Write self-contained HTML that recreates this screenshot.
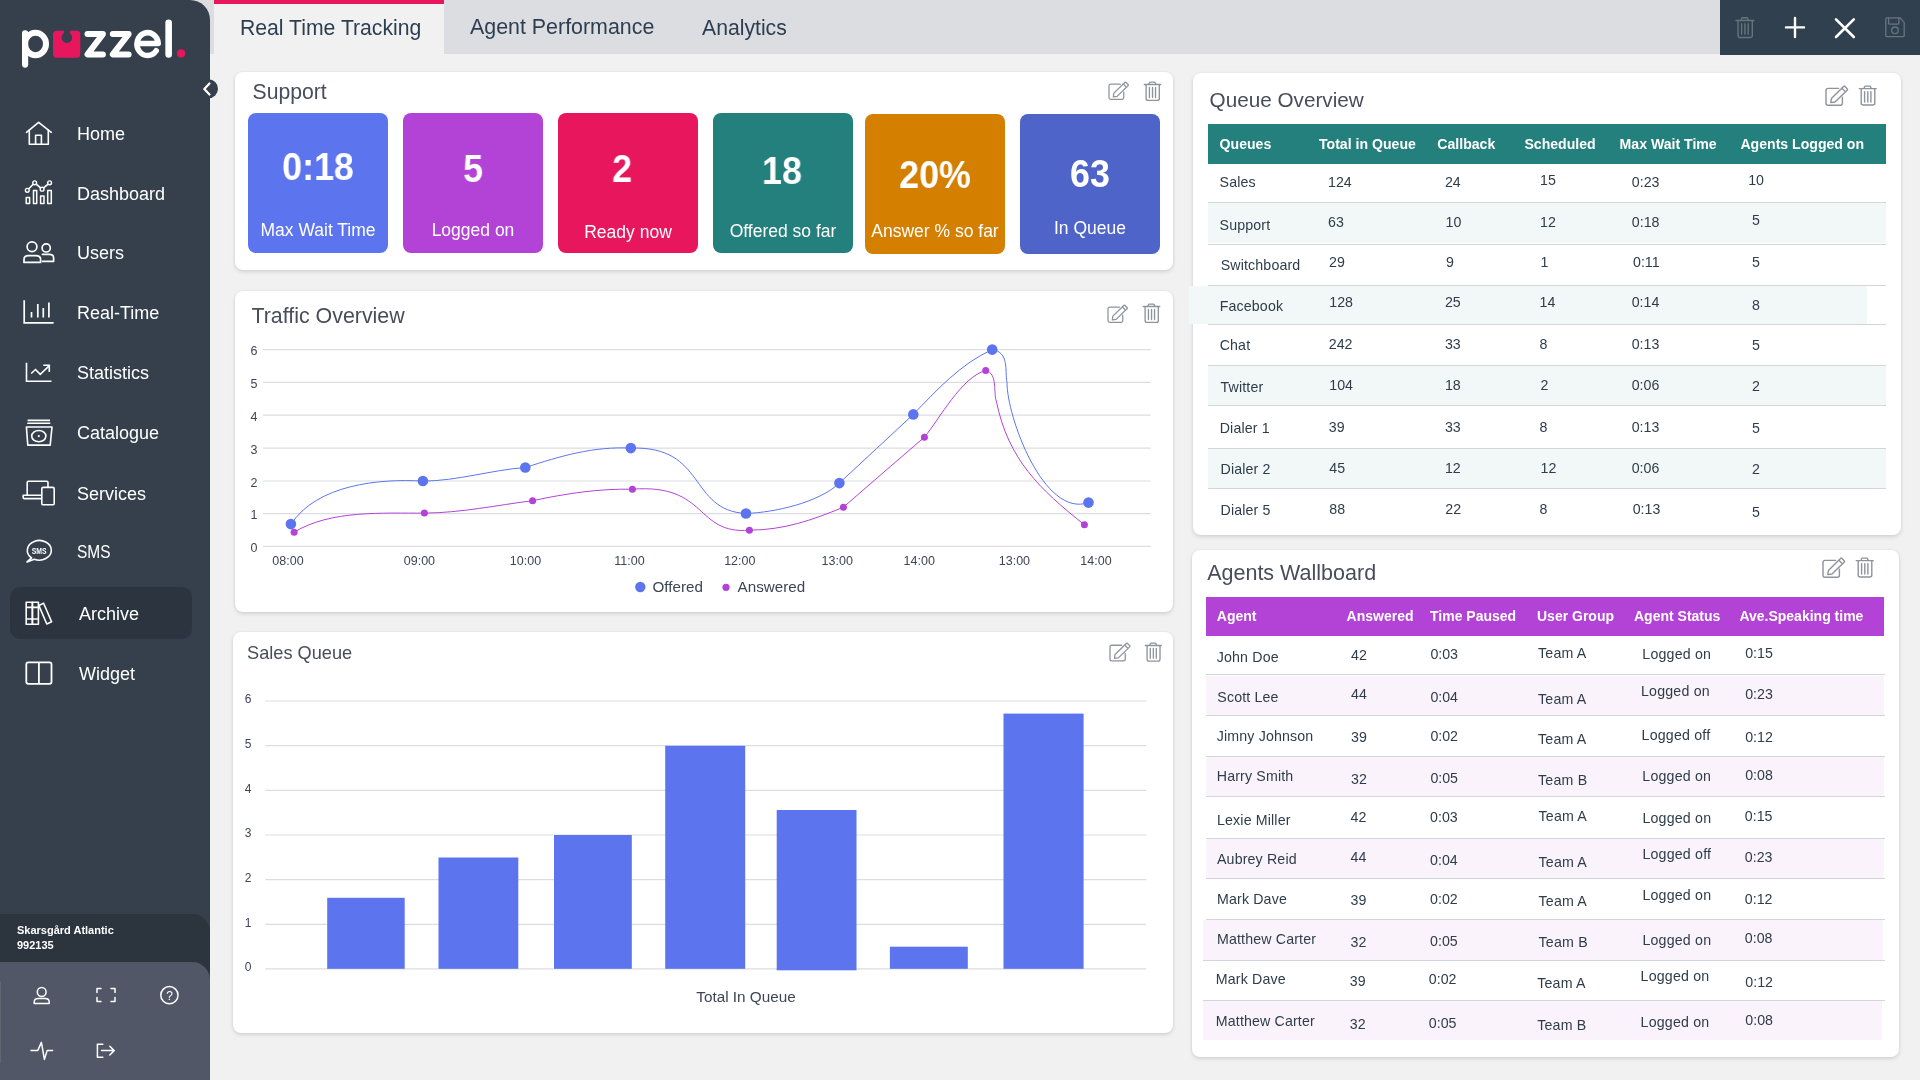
<!DOCTYPE html><html><head><meta charset="utf-8"><style>
html,body{margin:0;padding:0;width:1920px;height:1080px;overflow:hidden;background:#f1f1f1;font-family:"Liberation Sans", sans-serif;}
.t{position:absolute;white-space:nowrap;}
.r{position:absolute;}
svg{position:absolute;overflow:visible;}
#wrap{position:absolute;left:0;top:0;width:1920px;height:1080px;will-change:transform;}
</style></head><body><div id="wrap">
<div class="r" style="left:0px;top:0px;width:1920px;height:54px;background:#dcdde1;"></div>
<div class="r" style="left:214px;top:0px;width:230px;height:54px;background:#f1f1f1;"></div>
<div class="r" style="left:214px;top:0px;width:230px;height:4px;background:#e8175d;"></div>
<div class="t" style="left:240.0px;top:17.3px;font-size:21.2px;line-height:21.2px;color:#2c3e50;">Real Time Tracking</div>
<div class="t" style="left:470.0px;top:17.2px;font-size:21.4px;line-height:21.4px;color:#2c3e50;">Agent Performance</div>
<div class="t" style="left:702.0px;top:17.3px;font-size:21.2px;line-height:21.2px;color:#2c3e50;">Analytics</div>
<div class="r" style="left:1720px;top:0px;width:200px;height:55px;background:#30404f;"></div>
<div class="r" style="left:0px;top:0px;width:210px;height:1080px;background:#35404c;border-top-right-radius:20px;"></div>
<svg style="left:0;top:0" width="1" height="1"><circle cx="208.5" cy="88.7" r="9.5" fill="#35404c"/><path d="M209.5 83.5 L204.3 89 L209.5 94.5" fill="none" stroke="#fff" stroke-width="2.2" stroke-linecap="round" stroke-linejoin="round"/></svg>
<div class="r" style="left:10px;top:587px;width:182px;height:52px;background:#2c353f;border-radius:10px;"></div>
<div class="t" style="left:77.0px;top:124.9px;font-size:18px;line-height:18px;color:#ffffff;">Home</div>
<div class="t" style="left:77.0px;top:184.9px;font-size:18px;line-height:18px;color:#ffffff;">Dashboard</div>
<div class="t" style="left:77.0px;top:243.9px;font-size:18px;line-height:18px;color:#ffffff;">Users</div>
<div class="t" style="left:77.0px;top:303.9px;font-size:18px;line-height:18px;color:#ffffff;">Real-Time</div>
<div class="t" style="left:77.0px;top:363.9px;font-size:18px;line-height:18px;color:#ffffff;">Statistics</div>
<div class="t" style="left:77.0px;top:423.9px;font-size:18px;line-height:18px;color:#ffffff;">Catalogue</div>
<div class="t" style="left:77.0px;top:484.9px;font-size:18px;line-height:18px;color:#ffffff;">Services</div>
<div class="t" style="left:77.0px;top:542.9px;font-size:18px;line-height:18px;color:#ffffff;transform:scaleX(0.86);transform-origin:0 0;">SMS</div>
<div class="t" style="left:79.0px;top:604.9px;font-size:18px;line-height:18px;color:#ffffff;">Archive</div>
<div class="t" style="left:79.0px;top:664.9px;font-size:18px;line-height:18px;color:#ffffff;">Widget</div>
<div class="r" style="left:0px;top:914px;width:210px;height:60px;background:#2c343e;border-top-right-radius:18px;"></div>
<div class="r" style="left:0px;top:962px;width:210px;height:118px;background:#515766;border-top-right-radius:18px;"></div>
<div class="r" style="left:0px;top:982px;width:1px;height:81px;background:#62666f;"></div>
<div class="t" style="left:17.0px;top:925.4px;font-size:11px;line-height:11px;color:#ffffff;font-weight:bold;">Skarsgård Atlantic</div>
<div class="t" style="left:17.0px;top:940.4px;font-size:11px;line-height:11px;color:#ffffff;font-weight:bold;">992135</div>
<div class="r" style="left:235px;top:72px;width:938px;height:198px;background:#ffffff;border-radius:8px;box-shadow:0 2px 4px rgba(0,0,0,0.12),0 0 3px rgba(0,0,0,0.07);"></div>
<div class="r" style="left:235px;top:291px;width:938px;height:321px;background:#ffffff;border-radius:8px;box-shadow:0 2px 4px rgba(0,0,0,0.12),0 0 3px rgba(0,0,0,0.07);"></div>
<div class="r" style="left:233px;top:632px;width:940px;height:401px;background:#ffffff;border-radius:8px;box-shadow:0 2px 4px rgba(0,0,0,0.12),0 0 3px rgba(0,0,0,0.07);"></div>
<div class="r" style="left:1193px;top:73px;width:708px;height:462px;background:#ffffff;border-radius:8px;box-shadow:0 2px 4px rgba(0,0,0,0.12),0 0 3px rgba(0,0,0,0.07);"></div>
<div class="r" style="left:1192px;top:550px;width:707px;height:507px;background:#ffffff;border-radius:8px;box-shadow:0 2px 4px rgba(0,0,0,0.12),0 0 3px rgba(0,0,0,0.07);"></div>
<div class="r" style="left:248px;top:113px;width:140px;height:140px;background:#5c75ee;border-radius:8px;"></div>
<div class="t" style="left:-82.0px;width:800px;text-align:center;top:146.8px;font-size:39px;line-height:39px;color:#ffffff;font-weight:bold;transform:scaleX(0.92);">0:18</div>
<div class="t" style="left:-82.0px;width:800px;text-align:center;top:222.2px;font-size:17.5px;line-height:17.5px;color:#ffffff;">Max Wait Time</div>
<div class="r" style="left:403px;top:113px;width:140px;height:140px;background:#b342d6;border-radius:8px;"></div>
<div class="t" style="left:73.0px;width:800px;text-align:center;top:148.8px;font-size:39px;line-height:39px;color:#ffffff;font-weight:bold;transform:scaleX(0.92);">5</div>
<div class="t" style="left:73.0px;width:800px;text-align:center;top:222.2px;font-size:17.5px;line-height:17.5px;color:#ffffff;">Logged on</div>
<div class="r" style="left:558px;top:113px;width:140px;height:140px;background:#e8175d;border-radius:8px;"></div>
<div class="t" style="left:222.0px;width:800px;text-align:center;top:149.3px;font-size:39px;line-height:39px;color:#ffffff;font-weight:bold;transform:scaleX(0.92);">2</div>
<div class="t" style="left:228.0px;width:800px;text-align:center;top:223.9px;font-size:17.5px;line-height:17.5px;color:#ffffff;">Ready now</div>
<div class="r" style="left:713px;top:113px;width:140px;height:140px;background:#23807c;border-radius:8px;"></div>
<div class="t" style="left:381.5px;width:800px;text-align:center;top:151.3px;font-size:39px;line-height:39px;color:#ffffff;font-weight:bold;transform:scaleX(0.92);">18</div>
<div class="t" style="left:383.0px;width:800px;text-align:center;top:222.9px;font-size:17.5px;line-height:17.5px;color:#ffffff;">Offered so far</div>
<div class="r" style="left:865px;top:114px;width:140px;height:140px;background:#d47f00;border-radius:8px;"></div>
<div class="t" style="left:535.0px;width:800px;text-align:center;top:155.1px;font-size:39px;line-height:39px;color:#ffffff;font-weight:bold;transform:scaleX(0.92);">20%</div>
<div class="t" style="left:535.0px;width:800px;text-align:center;top:223.2px;font-size:17.5px;line-height:17.5px;color:#ffffff;">Answer % so far</div>
<div class="r" style="left:1020px;top:114px;width:140px;height:140px;background:#4f64c9;border-radius:8px;"></div>
<div class="t" style="left:690.0px;width:800px;text-align:center;top:154.1px;font-size:39px;line-height:39px;color:#ffffff;font-weight:bold;transform:scaleX(0.92);">63</div>
<div class="t" style="left:690.0px;width:800px;text-align:center;top:220.4px;font-size:17.5px;line-height:17.5px;color:#ffffff;">In Queue</div>
<div class="t" style="left:252.5px;top:81.3px;font-size:21.2px;line-height:21.2px;color:#474d5a;">Support</div>
<div class="t" style="left:251.4px;top:306.2px;font-size:21.4px;line-height:21.4px;color:#474d5a;">Traffic Overview</div>
<div class="t" style="left:247.0px;top:643.8px;font-size:18.2px;line-height:18.2px;color:#474d5a;">Sales Queue</div>
<div class="t" style="left:1209.6px;top:89.5px;font-size:20.7px;line-height:20.7px;color:#474d5a;">Queue Overview</div>
<div class="t" style="left:1207.2px;top:563.1px;font-size:21.5px;line-height:21.5px;color:#474d5a;">Agents Wallboard</div>
<svg style="left:1825.8px;top:86.2px" width="1" height="1"><g transform="scale(1.0)" fill="none" stroke="#8e939c" stroke-width="1.4" stroke-linejoin="round" stroke-linecap="round"><path d="M12.6 2.4 H2 Q0 2.4 0 4.4 V17.2 Q0 19.2 2 19.2 H14.4 Q16.4 19.2 16.4 17.2 V11.2"/><path d="M5.4 12.4 L17.8 0.3 Q18.2 -0.1 18.6 0.3 L21.4 3.1 Q21.8 3.5 21.4 3.9 L9 16 L4.8 16.6 Z"/><path d="M15.9 2.3 L18.7 5.1"/></g></svg>
<svg style="left:1858.5px;top:86.1px" width="1" height="1"><g transform="scale(1.0)" fill="none" stroke="#8e939c" stroke-width="1.4" stroke-linecap="round" stroke-linejoin="round"><path d="M0.3 2.6 H17.2"/><path d="M5 2.4 L5.6 0.8 Q5.9 0.1 6.6 0.1 H10.6 Q11.3 0.1 11.6 0.8 L12.2 2.4"/><path d="M2.2 2.8 V17 Q2.2 19 4.2 19 H13.8 Q15.8 19 15.8 17 V2.8"/><path d="M5.6 5.6 V16 M8.8 5.6 V16 M11.9 5.6 V16"/></g></svg>
<svg style="left:1109.3px;top:82px" width="1" height="1"><g transform="scale(0.9)" fill="none" stroke="#8e939c" stroke-width="1.4" stroke-linejoin="round" stroke-linecap="round"><path d="M12.6 2.4 H2 Q0 2.4 0 4.4 V17.2 Q0 19.2 2 19.2 H14.4 Q16.4 19.2 16.4 17.2 V11.2"/><path d="M5.4 12.4 L17.8 0.3 Q18.2 -0.1 18.6 0.3 L21.4 3.1 Q21.8 3.5 21.4 3.9 L9 16 L4.8 16.6 Z"/><path d="M15.9 2.3 L18.7 5.1"/></g></svg>
<svg style="left:1144px;top:81.6px" width="1" height="1"><g transform="scale(0.97)" fill="none" stroke="#8e939c" stroke-width="1.4" stroke-linecap="round" stroke-linejoin="round"><path d="M0.3 2.6 H17.2"/><path d="M5 2.4 L5.6 0.8 Q5.9 0.1 6.6 0.1 H10.6 Q11.3 0.1 11.6 0.8 L12.2 2.4"/><path d="M2.2 2.8 V17 Q2.2 19 4.2 19 H13.8 Q15.8 19 15.8 17 V2.8"/><path d="M5.6 5.6 V16 M8.8 5.6 V16 M11.9 5.6 V16"/></g></svg>
<svg style="left:1108px;top:304.6px" width="1" height="1"><g transform="scale(0.9)" fill="none" stroke="#8e939c" stroke-width="1.4" stroke-linejoin="round" stroke-linecap="round"><path d="M12.6 2.4 H2 Q0 2.4 0 4.4 V17.2 Q0 19.2 2 19.2 H14.4 Q16.4 19.2 16.4 17.2 V11.2"/><path d="M5.4 12.4 L17.8 0.3 Q18.2 -0.1 18.6 0.3 L21.4 3.1 Q21.8 3.5 21.4 3.9 L9 16 L4.8 16.6 Z"/><path d="M15.9 2.3 L18.7 5.1"/></g></svg>
<svg style="left:1143px;top:304.2px" width="1" height="1"><g transform="scale(0.97)" fill="none" stroke="#8e939c" stroke-width="1.4" stroke-linecap="round" stroke-linejoin="round"><path d="M0.3 2.6 H17.2"/><path d="M5 2.4 L5.6 0.8 Q5.9 0.1 6.6 0.1 H10.6 Q11.3 0.1 11.6 0.8 L12.2 2.4"/><path d="M2.2 2.8 V17 Q2.2 19 4.2 19 H13.8 Q15.8 19 15.8 17 V2.8"/><path d="M5.6 5.6 V16 M8.8 5.6 V16 M11.9 5.6 V16"/></g></svg>
<svg style="left:1109.8px;top:643.3px" width="1" height="1"><g transform="scale(0.93)" fill="none" stroke="#8e939c" stroke-width="1.4" stroke-linejoin="round" stroke-linecap="round"><path d="M12.6 2.4 H2 Q0 2.4 0 4.4 V17.2 Q0 19.2 2 19.2 H14.4 Q16.4 19.2 16.4 17.2 V11.2"/><path d="M5.4 12.4 L17.8 0.3 Q18.2 -0.1 18.6 0.3 L21.4 3.1 Q21.8 3.5 21.4 3.9 L9 16 L4.8 16.6 Z"/><path d="M15.9 2.3 L18.7 5.1"/></g></svg>
<svg style="left:1145.2px;top:643.3px" width="1" height="1"><g transform="scale(0.95)" fill="none" stroke="#8e939c" stroke-width="1.4" stroke-linecap="round" stroke-linejoin="round"><path d="M0.3 2.6 H17.2"/><path d="M5 2.4 L5.6 0.8 Q5.9 0.1 6.6 0.1 H10.6 Q11.3 0.1 11.6 0.8 L12.2 2.4"/><path d="M2.2 2.8 V17 Q2.2 19 4.2 19 H13.8 Q15.8 19 15.8 17 V2.8"/><path d="M5.6 5.6 V16 M8.8 5.6 V16 M11.9 5.6 V16"/></g></svg>
<svg style="left:1823.4px;top:558.4px" width="1" height="1"><g transform="scale(1.0)" fill="none" stroke="#8e939c" stroke-width="1.4" stroke-linejoin="round" stroke-linecap="round"><path d="M12.6 2.4 H2 Q0 2.4 0 4.4 V17.2 Q0 19.2 2 19.2 H14.4 Q16.4 19.2 16.4 17.2 V11.2"/><path d="M5.4 12.4 L17.8 0.3 Q18.2 -0.1 18.6 0.3 L21.4 3.1 Q21.8 3.5 21.4 3.9 L9 16 L4.8 16.6 Z"/><path d="M15.9 2.3 L18.7 5.1"/></g></svg>
<svg style="left:1856.4px;top:558.2px" width="1" height="1"><g transform="scale(1.0)" fill="none" stroke="#8e939c" stroke-width="1.4" stroke-linecap="round" stroke-linejoin="round"><path d="M0.3 2.6 H17.2"/><path d="M5 2.4 L5.6 0.8 Q5.9 0.1 6.6 0.1 H10.6 Q11.3 0.1 11.6 0.8 L12.2 2.4"/><path d="M2.2 2.8 V17 Q2.2 19 4.2 19 H13.8 Q15.8 19 15.8 17 V2.8"/><path d="M5.6 5.6 V16 M8.8 5.6 V16 M11.9 5.6 V16"/></g></svg>
<svg style="left:0;top:0" width="1" height="1"><g transform="translate(1735.7,17.6) scale(1.05)" fill="none" stroke="#68757f" stroke-width="1.3" stroke-linecap="round" stroke-linejoin="round"><path d="M0.3 2.8 H17.2"/><path d="M5 2.6 L5.6 1 Q5.9 0.1 6.6 0.1 H10.6 Q11.3 0.1 11.6 1 L12.2 2.6"/><path d="M2.2 3 V17.4 Q2.2 19 3.8 19 H14.2 Q15.8 19 15.8 17.4 V3"/><path d="M5.6 5.8 V15.8 M8.8 5.8 V15.8 M11.9 5.8 V15.8"/></g><path d="M1795 18 V37 M1786 27.4 H1804" stroke="#ffffff" stroke-width="2.4" stroke-linecap="round"/><path d="M1836 19.3 L1853.8 37 M1853.8 19.3 L1836 37" stroke="#ffffff" stroke-width="2.6" stroke-linecap="round"/><g fill="none" stroke="#68757f" stroke-width="1.3" stroke-linejoin="round"><path d="M1887 17.8 H1900 L1904.2 22.4 V35.4 Q1904.2 36.6 1903 36.6 H1887 Q1885.8 36.6 1885.8 35.4 V19 Q1885.8 17.8 1887 17.8 Z"/><path d="M1888.6 17.8 V23.4 Q1888.6 24.2 1889.4 24.2 H1898 Q1898.8 24.2 1898.8 23.4 V17.8"/><circle cx="1895" cy="30.3" r="3.3"/></g></svg>
<svg style="left:0;top:0" width="1" height="1"><g fill="none" stroke="#ffffff" stroke-linecap="round" stroke-linejoin="round"><path d="M25.1 33.3 V64.6" stroke-width="6.2"/><ellipse cx="35.5" cy="43.95" rx="10.5" ry="11.2" stroke-width="6"/><path d="M87.5 34.1 H102.9 L87.5 54.4 H102.9" stroke-width="6"/><path d="M112.8 34.1 H128.6 L112.8 54.4 H128.6" stroke-width="6"/><path d="M137.7 43.5 H158.2 A10.6 11.4 0 1 0 156.2 50.8" stroke-width="5.6"/><path d="M168.65 22.8 V54.4" stroke-width="6.6"/></g><rect x="53" y="30.8" width="27.3" height="26.9" rx="3.7" fill="#e8175d"/><rect x="63.9" y="29" width="5.9" height="6" fill="#35404c"/><circle cx="66.85" cy="37.6" r="5.3" fill="#35404c"/><circle cx="181.1" cy="53.4" r="4.1" fill="#e8175d"/></svg>
<svg style="left:0;top:0" width="1" height="1"><g fill="none" stroke="#ffffff" stroke-width="1.6" stroke-linecap="round" stroke-linejoin="round"><path d="M26.5 132.3 L38.6 122.3 L51.3 132.3"/><path d="M29.3 130 V144.2 H48.3 V130"/><path d="M35.6 144.2 V135.3 H41.4 V144.2"/><path d="M27.3 190.3 L34.7 182.8 L42.1 189.2 L49.6 182.8"/></g><g fill="#35404c" stroke="#ffffff" stroke-width="1.4"><circle cx="27.3" cy="190.3" r="1.9"/><circle cx="34.7" cy="182.8" r="1.9"/><circle cx="42.1" cy="189.2" r="1.9"/><circle cx="49.6" cy="182.8" r="1.9"/></g><g fill="none" stroke="#ffffff" stroke-width="1.5" stroke-linejoin="round"><rect x="26.2" y="197.6" width="3.4" height="6"/><rect x="33.5" y="190.6" width="3.2" height="13"/><rect x="40.6" y="196" width="3.4" height="7.6"/><rect x="47.7" y="190.6" width="3.6" height="13"/></g><g fill="none" stroke="#ffffff" stroke-width="1.7" stroke-linecap="round" stroke-linejoin="round"><circle cx="32" cy="246.8" r="4.9"/><path d="M24 262.4 V259.5 Q24 255.7 28.5 255.7 H35.8 Q40.6 255.7 40.6 259.5 V262.4 Z"/><circle cx="46.2" cy="247.9" r="4.1"/><path d="M42.4 254.3 H49.6 Q53.6 254.3 53.6 258 V261.3 H42.6"/></g><g fill="none" stroke="#ffffff" stroke-width="1.7" stroke-linecap="butt"><path d="M24.2 300.2 V322.8 H53.6"/><path d="M31.5 312 V317.6 M37.8 304 V317.6 M43.3 308 V317.6 M48.9 302.6 V317.6"/></g><g fill="none" stroke="#ffffff" stroke-width="1.6" stroke-linejoin="miter"><path d="M26.5 362.8 V381.2 H51.5"/><path d="M31.2 373.5 L35.5 369.5 L40.2 374.3 L48.9 366.2"/><path d="M43.3 365.3 H49.3 V371.9"/></g><g fill="none" stroke="#ffffff" stroke-width="1.6" stroke-linejoin="round"><path d="M27.6 420.4 H50 M27.3 423.2 H50.3"/><path d="M26.4 427 H52 L50.2 445.1 H27.8 Z"/><ellipse cx="38.8" cy="436.1" rx="7.1" ry="5.6"/></g><circle cx="38.8" cy="436.1" r="1.1" fill="#ffffff"/><g fill="none" stroke="#ffffff" stroke-width="1.6" stroke-linejoin="round"><path d="M27.2 495 V482.4 Q27.2 481.2 28.4 481.2 H46.8 Q48 481.2 48 482.4 V487"/><path d="M41.4 498.6 H24.4 Q23.2 498.6 23.2 497.4 V495.2 H41.4"/><rect x="41.8" y="487.4" width="12.4" height="17.4" rx="1.4"/></g><g fill="none" stroke="#ffffff" stroke-width="1.6" stroke-linejoin="round"><path d="M31.6 557.8 A12 9.8 0 1 1 34.3 559.2 L27 561.9 Z"/></g><text x="0" y="0" transform="translate(39.2,554) scale(0.8,1)" font-family="Liberation Sans" font-weight="bold" font-size="8.6" fill="#ffffff" text-anchor="middle">SMS</text><g fill="none" stroke="#ffffff" stroke-width="1.6" stroke-linejoin="round"><rect x="26.2" y="602.2" width="6.2" height="22"/><rect x="32.4" y="602.2" width="6" height="22"/><path d="M26.2 607.4 H38.4 M26.2 619 H38.4"/><path d="M38.8 605.4 L43.6 603.2 L51.6 621.8 L46.8 624 Z"/></g><g fill="none" stroke="#ffffff" stroke-width="1.8" stroke-linejoin="round"><rect x="26.3" y="662.4" width="25.2" height="21.4" rx="2"/><path d="M38.9 662.4 V683.8"/></g><g fill="none" stroke="#ffffff" stroke-width="1.5" stroke-linecap="round" stroke-linejoin="round"><circle cx="41.7" cy="992" r="4.4"/><path d="M34.2 1003.6 V1002.2 Q34.2 998.6 38.2 998.6 H45.2 Q49.2 998.6 49.2 1002.2 V1003.6 Z"/><path d="M97 992.6 V988.6 H101 M111 988.6 H115 V992.6 M115 997.6 V1001.6 H111 M101 1001.6 H97 V997.6"/><circle cx="169.4" cy="995.2" r="8.6"/><path d="M31 1050.4 H37.8 L41.4 1042.4 L44.4 1059.4 L47.2 1050.4 H52.6"/><path d="M102.8 1044.2 H97.4 V1057.2 H102.8"/><path d="M101.6 1050.6 H114.2 M109.8 1046.2 L114.2 1050.6 L109.8 1055"/></g><text x="169.6" y="999.6" font-family="Liberation Sans" font-size="12" fill="#ffffff" text-anchor="middle">?</text></svg>
<svg style="left:0;top:0" width="1" height="1"><path d="M263 349.6 H1150.6" stroke="#dcdde1" stroke-width="1.2"/><path d="M263 382.4 H1150.6" stroke="#dcdde1" stroke-width="1.2"/><path d="M263 415.2 H1150.6" stroke="#dcdde1" stroke-width="1.2"/><path d="M263 448.2 H1150.6" stroke="#dcdde1" stroke-width="1.2"/><path d="M263 481.0 H1150.6" stroke="#dcdde1" stroke-width="1.2"/><path d="M263 513.7 H1150.6" stroke="#dcdde1" stroke-width="1.2"/><path d="M263 546.4 H1150.6" stroke="#dcdde1" stroke-width="1.2"/></svg>
<div class="t" style="left:-146.0px;width:800px;text-align:center;top:345.1px;font-size:12.5px;line-height:12.5px;color:#3d4655;">6</div>
<div class="t" style="left:-146.0px;width:800px;text-align:center;top:377.9px;font-size:12.5px;line-height:12.5px;color:#3d4655;">5</div>
<div class="t" style="left:-146.0px;width:800px;text-align:center;top:410.7px;font-size:12.5px;line-height:12.5px;color:#3d4655;">4</div>
<div class="t" style="left:-146.0px;width:800px;text-align:center;top:443.7px;font-size:12.5px;line-height:12.5px;color:#3d4655;">3</div>
<div class="t" style="left:-146.0px;width:800px;text-align:center;top:476.5px;font-size:12.5px;line-height:12.5px;color:#3d4655;">2</div>
<div class="t" style="left:-146.0px;width:800px;text-align:center;top:509.2px;font-size:12.5px;line-height:12.5px;color:#3d4655;">1</div>
<div class="t" style="left:-146.0px;width:800px;text-align:center;top:541.9px;font-size:12.5px;line-height:12.5px;color:#3d4655;">0</div>
<div class="t" style="left:-112.0px;width:800px;text-align:center;top:554.9px;font-size:12.5px;line-height:12.5px;color:#3d4655;">08:00</div>
<div class="t" style="left:19.4px;width:800px;text-align:center;top:554.9px;font-size:12.5px;line-height:12.5px;color:#3d4655;">09:00</div>
<div class="t" style="left:125.5px;width:800px;text-align:center;top:554.9px;font-size:12.5px;line-height:12.5px;color:#3d4655;">10:00</div>
<div class="t" style="left:229.5px;width:800px;text-align:center;top:554.9px;font-size:12.5px;line-height:12.5px;color:#3d4655;">11:00</div>
<div class="t" style="left:339.8px;width:800px;text-align:center;top:554.9px;font-size:12.5px;line-height:12.5px;color:#3d4655;">12:00</div>
<div class="t" style="left:437.2px;width:800px;text-align:center;top:554.9px;font-size:12.5px;line-height:12.5px;color:#3d4655;">13:00</div>
<div class="t" style="left:519.2px;width:800px;text-align:center;top:554.9px;font-size:12.5px;line-height:12.5px;color:#3d4655;">14:00</div>
<div class="t" style="left:614.4px;width:800px;text-align:center;top:554.9px;font-size:12.5px;line-height:12.5px;color:#3d4655;">13:00</div>
<div class="t" style="left:696.0px;width:800px;text-align:center;top:554.9px;font-size:12.5px;line-height:12.5px;color:#3d4655;">14:00</div>
<svg style="left:0;top:0" width="1" height="1"><path d="M294.0 532.3 C330.6 509.7 383.4 513.5 424.5 513.1 C461.4 512.8 496.2 505.3 532.5 500.7 C566.0 493.6 598.0 488.6 632.4 489.2 C708.3 483.4 694.9 534.7 749.4 530.2 C784.1 529.9 811.8 520.3 843.4 507.2 C870.6 484.1 897.0 460.1 924.4 437.2 C939.2 419.3 961.9 376.5 985.7 370.6 C997.9 372.9 993.3 393.6 996.3 401.1 C1008.3 459.7 1039.7 489.2 1084.4 524.8" fill="none" stroke="#b342d6" stroke-width="1"/><path d="M290.8 524.6 C316.7 484.4 379.6 478.5 422.7 481.1 C457.4 481.0 490.9 470.0 525.4 467.5 C560.2 456.1 593.7 446.2 630.9 448.1 C706.9 445.6 688.2 510.5 746.0 513.5 C774.2 512.4 818.3 502.9 839.4 483.1 C863.7 459.9 889.0 437.6 913.3 414.4 C936.2 390.5 961.3 363.3 992.2 349.6 C1009.5 352.3 1004.7 370.4 1007.0 382.6 C1006.8 416.0 1043.5 518.3 1088.5 502.6" fill="none" stroke="#5c75ee" stroke-width="1"/><circle cx="294.1" cy="532.2" r="3.5" fill="#b342d6"/><circle cx="424.4" cy="512.9" r="3.5" fill="#b342d6"/><circle cx="532.6" cy="500.7" r="3.5" fill="#b342d6"/><circle cx="632.4" cy="489.3" r="3.5" fill="#b342d6"/><circle cx="749.4" cy="530.25" r="3.5" fill="#b342d6"/><circle cx="843.4" cy="507.25" r="3.5" fill="#b342d6"/><circle cx="924.4" cy="437.2" r="3.5" fill="#b342d6"/><circle cx="985.7" cy="370.6" r="3.5" fill="#b342d6"/><circle cx="1084.4" cy="524.8" r="3.5" fill="#b342d6"/><circle cx="290.9" cy="524.1" r="5.3" fill="#5c75ee"/><circle cx="422.9" cy="481" r="5.3" fill="#5c75ee"/><circle cx="525.3" cy="467.5" r="5.3" fill="#5c75ee"/><circle cx="630.8" cy="448.1" r="5.3" fill="#5c75ee"/><circle cx="746" cy="513.5" r="5.3" fill="#5c75ee"/><circle cx="839.4" cy="483.1" r="5.3" fill="#5c75ee"/><circle cx="913.3" cy="414.4" r="5.3" fill="#5c75ee"/><circle cx="992.2" cy="349.6" r="5.3" fill="#5c75ee"/><circle cx="1088.5" cy="502.6" r="5.3" fill="#5c75ee"/><circle cx="640.3" cy="587" r="5.2" fill="#5c75ee"/><circle cx="726" cy="587.3" r="3.6" fill="#b342d6"/></svg>
<div class="t" style="left:652.5px;top:579.3px;font-size:15.2px;line-height:15.2px;color:#3d4655;">Offered</div>
<div class="t" style="left:737.6px;top:579.3px;font-size:15.2px;line-height:15.2px;color:#3d4655;">Answered</div>
<svg style="left:0;top:0" width="1" height="1"><path d="M265.3 701.0 H1146.3" stroke="#dcdde1" stroke-width="1.2"/><path d="M265.3 745.6 H1146.3" stroke="#dcdde1" stroke-width="1.2"/><path d="M265.3 790.3 H1146.3" stroke="#dcdde1" stroke-width="1.2"/><path d="M265.3 835.0 H1146.3" stroke="#dcdde1" stroke-width="1.2"/><path d="M265.3 879.6 H1146.3" stroke="#dcdde1" stroke-width="1.2"/><path d="M265.3 924.3 H1146.3" stroke="#dcdde1" stroke-width="1.2"/><path d="M265.3 968.8 H1146.3" stroke="#dcdde1" stroke-width="1.2"/><rect x="327.2" y="897.8" width="77.5" height="71.0" fill="#5c75ee"/><rect x="438.5" y="857.5" width="79.8" height="111.3" fill="#5c75ee"/><rect x="554" y="835" width="77.8" height="133.8" fill="#5c75ee"/><rect x="665.2" y="745.8" width="80.0" height="223.0" fill="#5c75ee"/><rect x="776.7" y="810" width="79.8" height="160.3" fill="#5c75ee"/><rect x="889.9" y="946.7" width="77.9" height="22.1" fill="#5c75ee"/><rect x="1003.5" y="713.6" width="80.1" height="255.2" fill="#5c75ee"/></svg>
<div class="t" style="left:-152.0px;width:800px;text-align:center;top:693.4px;font-size:12px;line-height:12px;color:#3d4655;">6</div>
<div class="t" style="left:-152.0px;width:800px;text-align:center;top:738.0px;font-size:12px;line-height:12px;color:#3d4655;">5</div>
<div class="t" style="left:-152.0px;width:800px;text-align:center;top:782.7px;font-size:12px;line-height:12px;color:#3d4655;">4</div>
<div class="t" style="left:-152.0px;width:800px;text-align:center;top:827.4px;font-size:12px;line-height:12px;color:#3d4655;">3</div>
<div class="t" style="left:-152.0px;width:800px;text-align:center;top:872.0px;font-size:12px;line-height:12px;color:#3d4655;">2</div>
<div class="t" style="left:-152.0px;width:800px;text-align:center;top:916.7px;font-size:12px;line-height:12px;color:#3d4655;">1</div>
<div class="t" style="left:-152.0px;width:800px;text-align:center;top:961.2px;font-size:12px;line-height:12px;color:#3d4655;">0</div>
<div class="t" style="left:346.0px;width:800px;text-align:center;top:989.3px;font-size:15.3px;line-height:15.3px;color:#3d4655;">Total In Queue</div>
<div class="r" style="left:1208px;top:124px;width:678px;height:40px;background:#23807c;"></div>
<div class="t" style="left:1219.6px;top:137.0px;font-size:14.1px;line-height:14.1px;color:#ffffff;font-weight:bold;">Queues</div>
<div class="t" style="left:1319.0px;top:137.0px;font-size:14.1px;line-height:14.1px;color:#ffffff;font-weight:bold;">Total in Queue</div>
<div class="t" style="left:1437.3px;top:137.0px;font-size:14.1px;line-height:14.1px;color:#ffffff;font-weight:bold;">Callback</div>
<div class="t" style="left:1524.4px;top:137.0px;font-size:14.1px;line-height:14.1px;color:#ffffff;font-weight:bold;">Scheduled</div>
<div class="t" style="left:1619.6px;top:137.0px;font-size:14.1px;line-height:14.1px;color:#ffffff;font-weight:bold;">Max Wait Time</div>
<div class="t" style="left:1740.4px;top:137.0px;font-size:14.1px;line-height:14.1px;color:#ffffff;font-weight:bold;">Agents Logged on</div>
<div class="r" style="left:1208px;top:203px;width:678px;height:40px;background:#f2f7f7;"></div>
<div class="r" style="left:1189px;top:286px;width:678px;height:38px;background:#f2f7f7;"></div>
<div class="r" style="left:1208px;top:365.5px;width:678px;height:39px;background:#f2f7f7;"></div>
<div class="r" style="left:1208px;top:448.5px;width:678px;height:39px;background:#f2f7f7;"></div>
<div class="r" style="left:1208px;top:202px;width:678px;height:1px;background:#d2d5d9;"></div>
<div class="r" style="left:1208px;top:244px;width:678px;height:1px;background:#d2d5d9;"></div>
<div class="r" style="left:1208px;top:285px;width:678px;height:1px;background:#d2d5d9;"></div>
<div class="r" style="left:1208px;top:324px;width:678px;height:1px;background:#d2d5d9;"></div>
<div class="r" style="left:1208px;top:365px;width:678px;height:1px;background:#d2d5d9;"></div>
<div class="r" style="left:1208px;top:405px;width:678px;height:1px;background:#d2d5d9;"></div>
<div class="r" style="left:1208px;top:448px;width:678px;height:1px;background:#d2d5d9;"></div>
<div class="r" style="left:1208px;top:488px;width:678px;height:1px;background:#d2d5d9;"></div>
<div class="t" style="left:1219.6px;top:174.8px;font-size:14.2px;line-height:14.2px;color:#2f3d4a;letter-spacing:0.15px;">Sales</div>
<div class="t" style="left:1328.0px;top:174.8px;font-size:14.2px;line-height:14.2px;color:#2f3d4a;">124</div>
<div class="t" style="left:1444.9px;top:174.8px;font-size:14.2px;line-height:14.2px;color:#2f3d4a;">24</div>
<div class="t" style="left:1540.0px;top:173.4px;font-size:14.2px;line-height:14.2px;color:#2f3d4a;">15</div>
<div class="t" style="left:1631.8px;top:174.5px;font-size:14.2px;line-height:14.2px;color:#2f3d4a;">0:23</div>
<div class="t" style="left:1748.2px;top:172.8px;font-size:14.2px;line-height:14.2px;color:#2f3d4a;">10</div>
<div class="t" style="left:1219.6px;top:217.8px;font-size:14.2px;line-height:14.2px;color:#2f3d4a;letter-spacing:0.15px;">Support</div>
<div class="t" style="left:1328.0px;top:214.5px;font-size:14.2px;line-height:14.2px;color:#2f3d4a;">63</div>
<div class="t" style="left:1445.5px;top:214.5px;font-size:14.2px;line-height:14.2px;color:#2f3d4a;">10</div>
<div class="t" style="left:1540.0px;top:214.5px;font-size:14.2px;line-height:14.2px;color:#2f3d4a;">12</div>
<div class="t" style="left:1631.8px;top:214.5px;font-size:14.2px;line-height:14.2px;color:#2f3d4a;">0:18</div>
<div class="t" style="left:1752.0px;top:213.4px;font-size:14.2px;line-height:14.2px;color:#2f3d4a;">5</div>
<div class="t" style="left:1220.7px;top:258.1px;font-size:14.2px;line-height:14.2px;color:#2f3d4a;letter-spacing:0.15px;">Switchboard</div>
<div class="t" style="left:1329.0px;top:254.5px;font-size:14.2px;line-height:14.2px;color:#2f3d4a;">29</div>
<div class="t" style="left:1446.0px;top:254.5px;font-size:14.2px;line-height:14.2px;color:#2f3d4a;">9</div>
<div class="t" style="left:1540.4px;top:254.5px;font-size:14.2px;line-height:14.2px;color:#2f3d4a;">1</div>
<div class="t" style="left:1633.0px;top:254.5px;font-size:14.2px;line-height:14.2px;color:#2f3d4a;">0:11</div>
<div class="t" style="left:1752.0px;top:255.1px;font-size:14.2px;line-height:14.2px;color:#2f3d4a;">5</div>
<div class="t" style="left:1219.7px;top:299.0px;font-size:14.2px;line-height:14.2px;color:#2f3d4a;letter-spacing:0.15px;">Facebook</div>
<div class="t" style="left:1329.3px;top:294.7px;font-size:14.2px;line-height:14.2px;color:#2f3d4a;">128</div>
<div class="t" style="left:1444.9px;top:294.7px;font-size:14.2px;line-height:14.2px;color:#2f3d4a;">25</div>
<div class="t" style="left:1539.5px;top:294.7px;font-size:14.2px;line-height:14.2px;color:#2f3d4a;">14</div>
<div class="t" style="left:1631.7px;top:294.7px;font-size:14.2px;line-height:14.2px;color:#2f3d4a;">0:14</div>
<div class="t" style="left:1751.9px;top:297.5px;font-size:14.2px;line-height:14.2px;color:#2f3d4a;">8</div>
<div class="t" style="left:1219.7px;top:337.8px;font-size:14.2px;line-height:14.2px;color:#2f3d4a;letter-spacing:0.15px;">Chat</div>
<div class="t" style="left:1328.8px;top:336.8px;font-size:14.2px;line-height:14.2px;color:#2f3d4a;">242</div>
<div class="t" style="left:1444.9px;top:336.8px;font-size:14.2px;line-height:14.2px;color:#2f3d4a;">33</div>
<div class="t" style="left:1539.5px;top:336.8px;font-size:14.2px;line-height:14.2px;color:#2f3d4a;">8</div>
<div class="t" style="left:1631.7px;top:336.8px;font-size:14.2px;line-height:14.2px;color:#2f3d4a;">0:13</div>
<div class="t" style="left:1752.0px;top:338.0px;font-size:14.2px;line-height:14.2px;color:#2f3d4a;">5</div>
<div class="t" style="left:1220.5px;top:379.7px;font-size:14.2px;line-height:14.2px;color:#2f3d4a;letter-spacing:0.15px;">Twitter</div>
<div class="t" style="left:1329.3px;top:377.8px;font-size:14.2px;line-height:14.2px;color:#2f3d4a;">104</div>
<div class="t" style="left:1444.9px;top:377.8px;font-size:14.2px;line-height:14.2px;color:#2f3d4a;">18</div>
<div class="t" style="left:1540.5px;top:377.8px;font-size:14.2px;line-height:14.2px;color:#2f3d4a;">2</div>
<div class="t" style="left:1631.7px;top:377.8px;font-size:14.2px;line-height:14.2px;color:#2f3d4a;">0:06</div>
<div class="t" style="left:1752.0px;top:378.8px;font-size:14.2px;line-height:14.2px;color:#2f3d4a;">2</div>
<div class="t" style="left:1219.7px;top:420.6px;font-size:14.2px;line-height:14.2px;color:#2f3d4a;letter-spacing:0.15px;">Dialer 1</div>
<div class="t" style="left:1328.8px;top:419.8px;font-size:14.2px;line-height:14.2px;color:#2f3d4a;">39</div>
<div class="t" style="left:1444.9px;top:419.8px;font-size:14.2px;line-height:14.2px;color:#2f3d4a;">33</div>
<div class="t" style="left:1539.5px;top:419.8px;font-size:14.2px;line-height:14.2px;color:#2f3d4a;">8</div>
<div class="t" style="left:1631.7px;top:419.8px;font-size:14.2px;line-height:14.2px;color:#2f3d4a;">0:13</div>
<div class="t" style="left:1752.0px;top:421.1px;font-size:14.2px;line-height:14.2px;color:#2f3d4a;">5</div>
<div class="t" style="left:1220.5px;top:462.4px;font-size:14.2px;line-height:14.2px;color:#2f3d4a;letter-spacing:0.15px;">Dialer 2</div>
<div class="t" style="left:1329.3px;top:460.8px;font-size:14.2px;line-height:14.2px;color:#2f3d4a;">45</div>
<div class="t" style="left:1444.9px;top:460.8px;font-size:14.2px;line-height:14.2px;color:#2f3d4a;">12</div>
<div class="t" style="left:1540.5px;top:460.8px;font-size:14.2px;line-height:14.2px;color:#2f3d4a;">12</div>
<div class="t" style="left:1631.7px;top:460.8px;font-size:14.2px;line-height:14.2px;color:#2f3d4a;">0:06</div>
<div class="t" style="left:1752.0px;top:462.0px;font-size:14.2px;line-height:14.2px;color:#2f3d4a;">2</div>
<div class="t" style="left:1220.5px;top:503.3px;font-size:14.2px;line-height:14.2px;color:#2f3d4a;letter-spacing:0.15px;">Dialer 5</div>
<div class="t" style="left:1329.3px;top:502.2px;font-size:14.2px;line-height:14.2px;color:#2f3d4a;">88</div>
<div class="t" style="left:1445.3px;top:502.2px;font-size:14.2px;line-height:14.2px;color:#2f3d4a;">22</div>
<div class="t" style="left:1539.5px;top:502.2px;font-size:14.2px;line-height:14.2px;color:#2f3d4a;">8</div>
<div class="t" style="left:1632.7px;top:502.2px;font-size:14.2px;line-height:14.2px;color:#2f3d4a;">0:13</div>
<div class="t" style="left:1752.0px;top:505.3px;font-size:14.2px;line-height:14.2px;color:#2f3d4a;">5</div>
<div class="r" style="left:1205.8px;top:596.6px;width:678px;height:39.7px;background:#b342d6;"></div>
<div class="t" style="left:1216.8px;top:609.1px;font-size:14.0px;line-height:14.0px;color:#ffffff;font-weight:bold;">Agent</div>
<div class="t" style="left:1346.6px;top:609.1px;font-size:14.0px;line-height:14.0px;color:#ffffff;font-weight:bold;">Answered</div>
<div class="t" style="left:1430.0px;top:609.1px;font-size:14.0px;line-height:14.0px;color:#ffffff;font-weight:bold;">Time Paused</div>
<div class="t" style="left:1537.0px;top:609.1px;font-size:14.0px;line-height:14.0px;color:#ffffff;font-weight:bold;">User Group</div>
<div class="t" style="left:1634.0px;top:609.1px;font-size:14.0px;line-height:14.0px;color:#ffffff;font-weight:bold;">Agent Status</div>
<div class="t" style="left:1739.4px;top:609.1px;font-size:14.0px;line-height:14.0px;color:#ffffff;font-weight:bold;">Ave.Speaking time</div>
<div class="r" style="left:1205.8px;top:675.5px;width:678px;height:39.8px;background:#faf3fb;"></div>
<div class="r" style="left:1205.8px;top:757px;width:678px;height:39.4px;background:#faf3fb;"></div>
<div class="r" style="left:1205.8px;top:838.6px;width:678px;height:39.7px;background:#faf3fb;"></div>
<div class="r" style="left:1203px;top:920.2px;width:680px;height:40px;background:#faf3fb;"></div>
<div class="r" style="left:1203px;top:1001.4px;width:679px;height:39.1px;background:#faf3fb;"></div>
<div class="r" style="left:1205.8px;top:674px;width:679px;height:1px;background:#d2d5d9;"></div>
<div class="r" style="left:1205.8px;top:715px;width:679px;height:1px;background:#d2d5d9;"></div>
<div class="r" style="left:1205.8px;top:756px;width:679px;height:1px;background:#d2d5d9;"></div>
<div class="r" style="left:1205.8px;top:796px;width:679px;height:1px;background:#d2d5d9;"></div>
<div class="r" style="left:1205.8px;top:838px;width:679px;height:1px;background:#d2d5d9;"></div>
<div class="r" style="left:1205.8px;top:878px;width:679px;height:1px;background:#d2d5d9;"></div>
<div class="r" style="left:1205.8px;top:919px;width:679px;height:1px;background:#d2d5d9;"></div>
<div class="r" style="left:1203px;top:960px;width:682px;height:1px;background:#d2d5d9;"></div>
<div class="r" style="left:1203px;top:1000px;width:682px;height:1px;background:#d2d5d9;"></div>
<div class="t" style="left:1216.8px;top:649.8px;font-size:14.2px;line-height:14.2px;color:#2f3d4a;letter-spacing:0.15px;">John Doe</div>
<div class="t" style="left:1351.0px;top:648.1px;font-size:14.2px;line-height:14.2px;color:#2f3d4a;">42</div>
<div class="t" style="left:1430.4px;top:646.6px;font-size:14.2px;line-height:14.2px;color:#2f3d4a;">0:03</div>
<div class="t" style="left:1538.0px;top:645.7px;font-size:14.2px;line-height:14.2px;color:#2f3d4a;letter-spacing:0.2px;">Team A</div>
<div class="t" style="left:1642.3px;top:647.4px;font-size:14.2px;line-height:14.2px;color:#2f3d4a;letter-spacing:0.2px;">Logged on</div>
<div class="t" style="left:1745.2px;top:646.2px;font-size:14.2px;line-height:14.2px;color:#2f3d4a;">0:15</div>
<div class="t" style="left:1217.3px;top:690.0px;font-size:14.2px;line-height:14.2px;color:#2f3d4a;letter-spacing:0.15px;">Scott Lee</div>
<div class="t" style="left:1351.0px;top:687.1px;font-size:14.2px;line-height:14.2px;color:#2f3d4a;">44</div>
<div class="t" style="left:1430.4px;top:689.5px;font-size:14.2px;line-height:14.2px;color:#2f3d4a;">0:04</div>
<div class="t" style="left:1538.0px;top:692.4px;font-size:14.2px;line-height:14.2px;color:#2f3d4a;letter-spacing:0.2px;">Team A</div>
<div class="t" style="left:1641.0px;top:683.5px;font-size:14.2px;line-height:14.2px;color:#2f3d4a;letter-spacing:0.2px;">Logged on</div>
<div class="t" style="left:1745.2px;top:687.1px;font-size:14.2px;line-height:14.2px;color:#2f3d4a;">0:23</div>
<div class="t" style="left:1216.8px;top:728.5px;font-size:14.2px;line-height:14.2px;color:#2f3d4a;letter-spacing:0.15px;">Jimny Johnson</div>
<div class="t" style="left:1351.0px;top:730.4px;font-size:14.2px;line-height:14.2px;color:#2f3d4a;">39</div>
<div class="t" style="left:1430.4px;top:728.5px;font-size:14.2px;line-height:14.2px;color:#2f3d4a;">0:02</div>
<div class="t" style="left:1538.0px;top:731.6px;font-size:14.2px;line-height:14.2px;color:#2f3d4a;letter-spacing:0.2px;">Team A</div>
<div class="t" style="left:1641.6px;top:728.0px;font-size:14.2px;line-height:14.2px;color:#2f3d4a;letter-spacing:0.2px;">Logged off</div>
<div class="t" style="left:1745.2px;top:730.0px;font-size:14.2px;line-height:14.2px;color:#2f3d4a;">0:12</div>
<div class="t" style="left:1216.8px;top:768.5px;font-size:14.2px;line-height:14.2px;color:#2f3d4a;letter-spacing:0.15px;">Harry Smith</div>
<div class="t" style="left:1351.0px;top:771.8px;font-size:14.2px;line-height:14.2px;color:#2f3d4a;">32</div>
<div class="t" style="left:1430.4px;top:770.8px;font-size:14.2px;line-height:14.2px;color:#2f3d4a;">0:05</div>
<div class="t" style="left:1538.0px;top:772.6px;font-size:14.2px;line-height:14.2px;color:#2f3d4a;letter-spacing:0.2px;">Team B</div>
<div class="t" style="left:1642.3px;top:769.4px;font-size:14.2px;line-height:14.2px;color:#2f3d4a;letter-spacing:0.2px;">Logged on</div>
<div class="t" style="left:1745.2px;top:767.8px;font-size:14.2px;line-height:14.2px;color:#2f3d4a;">0:08</div>
<div class="t" style="left:1217.0px;top:812.6px;font-size:14.2px;line-height:14.2px;color:#2f3d4a;letter-spacing:0.15px;">Lexie Miller</div>
<div class="t" style="left:1350.6px;top:810.2px;font-size:14.2px;line-height:14.2px;color:#2f3d4a;">42</div>
<div class="t" style="left:1430.1px;top:809.5px;font-size:14.2px;line-height:14.2px;color:#2f3d4a;">0:03</div>
<div class="t" style="left:1538.5px;top:808.7px;font-size:14.2px;line-height:14.2px;color:#2f3d4a;letter-spacing:0.2px;">Team A</div>
<div class="t" style="left:1642.4px;top:810.8px;font-size:14.2px;line-height:14.2px;color:#2f3d4a;letter-spacing:0.2px;">Logged on</div>
<div class="t" style="left:1744.8px;top:808.7px;font-size:14.2px;line-height:14.2px;color:#2f3d4a;">0:15</div>
<div class="t" style="left:1217.0px;top:852.2px;font-size:14.2px;line-height:14.2px;color:#2f3d4a;letter-spacing:0.15px;">Aubrey Reid</div>
<div class="t" style="left:1350.6px;top:849.6px;font-size:14.2px;line-height:14.2px;color:#2f3d4a;">44</div>
<div class="t" style="left:1430.1px;top:852.8px;font-size:14.2px;line-height:14.2px;color:#2f3d4a;">0:04</div>
<div class="t" style="left:1538.5px;top:855.3px;font-size:14.2px;line-height:14.2px;color:#2f3d4a;letter-spacing:0.2px;">Team A</div>
<div class="t" style="left:1642.4px;top:847.0px;font-size:14.2px;line-height:14.2px;color:#2f3d4a;letter-spacing:0.2px;">Logged off</div>
<div class="t" style="left:1744.8px;top:849.6px;font-size:14.2px;line-height:14.2px;color:#2f3d4a;">0:23</div>
<div class="t" style="left:1217.0px;top:891.6px;font-size:14.2px;line-height:14.2px;color:#2f3d4a;letter-spacing:0.15px;">Mark Dave</div>
<div class="t" style="left:1350.6px;top:893.2px;font-size:14.2px;line-height:14.2px;color:#2f3d4a;">39</div>
<div class="t" style="left:1430.1px;top:891.6px;font-size:14.2px;line-height:14.2px;color:#2f3d4a;">0:02</div>
<div class="t" style="left:1538.5px;top:894.2px;font-size:14.2px;line-height:14.2px;color:#2f3d4a;letter-spacing:0.2px;">Team A</div>
<div class="t" style="left:1642.4px;top:888.0px;font-size:14.2px;line-height:14.2px;color:#2f3d4a;letter-spacing:0.2px;">Logged on</div>
<div class="t" style="left:1744.8px;top:892.4px;font-size:14.2px;line-height:14.2px;color:#2f3d4a;">0:12</div>
<div class="t" style="left:1217.0px;top:931.8px;font-size:14.2px;line-height:14.2px;color:#2f3d4a;letter-spacing:0.15px;">Matthew Carter</div>
<div class="t" style="left:1350.6px;top:934.7px;font-size:14.2px;line-height:14.2px;color:#2f3d4a;">32</div>
<div class="t" style="left:1430.1px;top:933.6px;font-size:14.2px;line-height:14.2px;color:#2f3d4a;">0:05</div>
<div class="t" style="left:1538.5px;top:935.2px;font-size:14.2px;line-height:14.2px;color:#2f3d4a;letter-spacing:0.2px;">Team B</div>
<div class="t" style="left:1642.4px;top:933.1px;font-size:14.2px;line-height:14.2px;color:#2f3d4a;letter-spacing:0.2px;">Logged on</div>
<div class="t" style="left:1744.8px;top:930.5px;font-size:14.2px;line-height:14.2px;color:#2f3d4a;">0:08</div>
<div class="t" style="left:1215.8px;top:972.2px;font-size:14.2px;line-height:14.2px;color:#2f3d4a;letter-spacing:0.15px;">Mark Dave</div>
<div class="t" style="left:1349.8px;top:974.1px;font-size:14.2px;line-height:14.2px;color:#2f3d4a;">39</div>
<div class="t" style="left:1428.8px;top:972.2px;font-size:14.2px;line-height:14.2px;color:#2f3d4a;">0:02</div>
<div class="t" style="left:1537.2px;top:976.1px;font-size:14.2px;line-height:14.2px;color:#2f3d4a;letter-spacing:0.2px;">Team A</div>
<div class="t" style="left:1640.6px;top:968.8px;font-size:14.2px;line-height:14.2px;color:#2f3d4a;letter-spacing:0.2px;">Logged on</div>
<div class="t" style="left:1745.3px;top:974.6px;font-size:14.2px;line-height:14.2px;color:#2f3d4a;">0:12</div>
<div class="t" style="left:1215.8px;top:1013.8px;font-size:14.2px;line-height:14.2px;color:#2f3d4a;letter-spacing:0.15px;">Matthew Carter</div>
<div class="t" style="left:1349.8px;top:1016.8px;font-size:14.2px;line-height:14.2px;color:#2f3d4a;">32</div>
<div class="t" style="left:1428.8px;top:1015.5px;font-size:14.2px;line-height:14.2px;color:#2f3d4a;">0:05</div>
<div class="t" style="left:1537.2px;top:1017.6px;font-size:14.2px;line-height:14.2px;color:#2f3d4a;letter-spacing:0.2px;">Team B</div>
<div class="t" style="left:1640.6px;top:1015.0px;font-size:14.2px;line-height:14.2px;color:#2f3d4a;letter-spacing:0.2px;">Logged on</div>
<div class="t" style="left:1745.3px;top:1012.9px;font-size:14.2px;line-height:14.2px;color:#2f3d4a;">0:08</div>
</div></body></html>
